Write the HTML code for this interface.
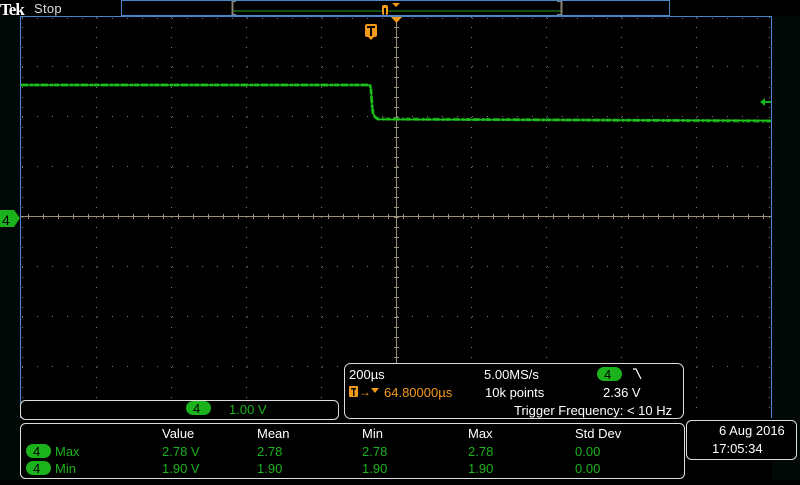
<!DOCTYPE html>
<html><head><meta charset="utf-8"><style>
body{margin:0;background:#000;width:800px;height:480px;overflow:hidden;font-family:"Liberation Sans",sans-serif}
svg text{font-family:"Liberation Sans",sans-serif}
</style></head><body>
<svg width="800" height="480" xmlns="http://www.w3.org/2000/svg">
<rect width="800" height="480" fill="#000"/>
<rect x="0" y="16" width="20" height="464" fill="#010805"/>
<rect x="772" y="16" width="28" height="464" fill="#010805"/>
<rect x="20" y="16" width="752" height="402" fill="#000"/>
<!-- top bar -->
<text x="0" y="15" fill="#fff" font-size="17" font-weight="bold" style="font-family:'Liberation Serif',serif" letter-spacing="-1">Tek</text>
<text x="34" y="13" fill="#ddd" font-size="13" letter-spacing="0.3">Stop</text>
<rect x="121.5" y="0.5" width="548" height="15" fill="none" stroke="#4a86c8"/>
<line x1="232" y1="11" x2="561" y2="11" stroke="#1a9a1a" stroke-width="1"/>
<line x1="232.5" y1="1" x2="232.5" y2="15" stroke="#8a8272" stroke-width="2"/>
<line x1="561.5" y1="1" x2="561.5" y2="15" stroke="#8a8272" stroke-width="2"/>
<line x1="232" y1="1.5" x2="236" y2="1.5" stroke="#8a8272"/><line x1="557" y1="1.5" x2="562" y2="1.5" stroke="#8a8272"/>
<line x1="232" y1="14.5" x2="236" y2="14.5" stroke="#8a8272"/><line x1="557" y1="14.5" x2="562" y2="14.5" stroke="#8a8272"/>
<polygon points="392,3 400,3 396,7" fill="#f39a1a"/>
<rect x="382" y="5" width="6" height="10" rx="2" fill="#f39a1a"/><rect x="384" y="8" width="2" height="7" fill="#000"/>
<!-- grid -->
<g stroke="#7a7a7a" stroke-width="1">
<line x1="96.5" y1="17" x2="96.5" y2="417" stroke-dasharray="1 9"/>
<line x1="171.5" y1="17" x2="171.5" y2="417" stroke-dasharray="1 9"/>
<line x1="246.5" y1="17" x2="246.5" y2="417" stroke-dasharray="1 9"/>
<line x1="321.5" y1="17" x2="321.5" y2="417" stroke-dasharray="1 9"/>
<line x1="471.5" y1="17" x2="471.5" y2="417" stroke-dasharray="1 9"/>
<line x1="546.5" y1="17" x2="546.5" y2="417" stroke-dasharray="1 9"/>
<line x1="621.5" y1="17" x2="621.5" y2="417" stroke-dasharray="1 9"/>
<line x1="696.5" y1="17" x2="696.5" y2="417" stroke-dasharray="1 9"/>
<line x1="22" y1="66.5" x2="771" y2="66.5" stroke-dasharray="1 14"/>
<line x1="22" y1="116.5" x2="771" y2="116.5" stroke-dasharray="1 14"/>
<line x1="22" y1="166.5" x2="771" y2="166.5" stroke-dasharray="1 14"/>
<line x1="22" y1="266.5" x2="771" y2="266.5" stroke-dasharray="1 14"/>
<line x1="22" y1="316.5" x2="771" y2="316.5" stroke-dasharray="1 14"/>
<line x1="22" y1="366.5" x2="771" y2="366.5" stroke-dasharray="1 14"/>
<line x1="22.5" y1="17" x2="22.5" y2="417" stroke-dasharray="1 9"/>
<line x1="769.5" y1="17" x2="769.5" y2="417" stroke-dasharray="1 9"/>
<line x1="22" y1="18.5" x2="771" y2="18.5" stroke-dasharray="1 14"/>
</g>
<g stroke="#9a9078">
<line x1="396.5" y1="16" x2="396.5" y2="418"/>
<line x1="20" y1="216.5" x2="771" y2="216.5"/>
<line x1="22" y1="216.5" x2="771" y2="216.5" stroke-width="5" stroke-dasharray="1 14" stroke-dashoffset="-6"/>
<line x1="396.5" y1="17" x2="396.5" y2="417" stroke-width="5" stroke-dasharray="1 9"/>
</g>
<line x1="20.5" y1="16" x2="20.5" y2="418" stroke="#4a86c8"/>
<line x1="771.5" y1="16" x2="771.5" y2="418" stroke="#4a86c8"/>
<line x1="20" y1="16.5" x2="772" y2="16.5" stroke="#4a86c8"/>
<!-- trigger markers -->
<polygon points="391,17 402,17 396.5,23" fill="#f39a1a"/>
<rect x="365" y="24" width="12" height="13" rx="2" fill="#f39a1a"/>
<rect x="367" y="26" width="8" height="2" fill="#000"/><rect x="370" y="28" width="2" height="8" fill="#000"/>
<polygon points="368,37 374,37 371,40" fill="#f39a1a"/>
<!-- trace -->
<polyline points="21,85 370,85 371,90 372,105 373,113 375,117 378,119 771,121" fill="none" stroke="#14a014" stroke-width="3" stroke-dasharray="7 2 3 1 5 2"/>
<polyline points="21,85 370,85 371,90 372,105 373,113 375,117 378,119.5 771,120.5" fill="none" stroke="#22c422" stroke-width="1.5"/>
<polygon points="760,102 765,98 765,106" fill="#1bb21b"/><line x1="764" y1="102" x2="771" y2="102" stroke="#1bb21b" stroke-width="2"/>
<!-- ch4 marker -->
<polygon points="0,210 14,210 20,218 14,227 0,227" fill="#1bb21b"/>
<text x="2" y="225" fill="#000" font-size="14">4</text>
<!-- channel box -->
<rect x="20.5" y="400.5" width="318" height="19" rx="5" fill="#000" stroke="#ddd"/>
<rect x="186" y="401" width="25" height="14" rx="7" fill="#1bb21b"/>
<text x="193" y="413" fill="#000" font-size="13">4</text>
<text x="229" y="414" fill="#1bb21b" font-size="13">1.00 V</text>
<!-- info box -->
<rect x="344.5" y="363.5" width="339" height="55" rx="6" fill="#000" stroke="#ddd"/>
<text x="349" y="379" fill="#fff" font-size="13">200µs</text>
<text x="484" y="379" fill="#fff" font-size="13">5.00MS/s</text>
<rect x="597" y="367" width="25" height="14" rx="7" fill="#1bb21b"/>
<text x="604" y="379" fill="#000" font-size="13">4</text>
<path d="M633 369 L636 369 L641 379" fill="none" stroke="#fff" stroke-width="1.2"/>
<rect x="349" y="386" width="9" height="11" rx="1" fill="#f39a1a"/><rect x="351" y="388" width="5" height="1.5" fill="#000"/><rect x="353" y="388" width="1.5" height="8" fill="#000"/>
<text x="359" y="396" fill="#f39a1a" font-size="12">→</text>
<polygon points="371,388 379,388 375,393" fill="#f39a1a"/>
<text x="384" y="397" fill="#f39a1a" font-size="13">64.80000µs</text>
<text x="485" y="397" fill="#fff" font-size="13">10k points</text>
<text x="603" y="397" fill="#fff" font-size="13">2.36 V</text>
<text x="514" y="415" fill="#fff" font-size="13">Trigger Frequency: &lt; 10 Hz</text>
<!-- measurements -->
<rect x="20.5" y="423.5" width="664" height="55" rx="5" fill="#000" stroke="#ddd"/>
<g font-size="13" fill="#fff">
<text x="162" y="438">Value</text><text x="257" y="438">Mean</text><text x="362" y="438">Min</text><text x="468" y="438">Max</text><text x="575" y="438">Std Dev</text>
</g>
<rect x="26" y="444" width="25" height="14" rx="7" fill="#1bb21b"/><text x="33" y="456" fill="#000" font-size="13">4</text>
<rect x="26" y="461" width="25" height="14" rx="7" fill="#1bb21b"/><text x="33" y="473" fill="#000" font-size="13">4</text>
<g font-size="13" fill="#1bb21b">
<text x="55" y="456">Max</text><text x="55" y="473">Min</text>
<text x="162" y="456">2.78 V</text><text x="257" y="456">2.78</text><text x="362" y="456">2.78</text><text x="468" y="456">2.78</text><text x="575" y="456">0.00</text>
<text x="162" y="473">1.90 V</text><text x="257" y="473">1.90</text><text x="362" y="473">1.90</text><text x="468" y="473">1.90</text><text x="575" y="473">0.00</text>
</g>
<!-- date box -->
<rect x="686.5" y="420.5" width="110" height="39" rx="5" fill="#000" stroke="#ddd"/>
<text x="719" y="435" fill="#fff" font-size="13">6 Aug  2016</text>
<text x="712" y="453" fill="#fff" font-size="13">17:05:34</text>
</svg>
</body></html>
